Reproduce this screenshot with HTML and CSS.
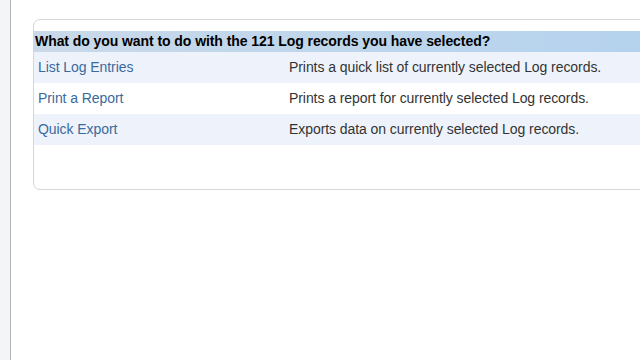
FILE: index.html
```html
<!DOCTYPE html>
<html>
<head>
<meta charset="utf-8">
<link rel="stylesheet" href="styles.css">
</head>
<body>
<div class="page">
  <div class="strip"></div>
  <div class="main">
    <div class="panel">
      <div class="header">What do you want to do with the 121 Log records you have selected?</div>
      <div class="row alt">
        <a class="link">List Log Entries</a>
        <span class="desc">Prints a quick list of currently selected Log records.</span>
      </div>
      <div class="row">
        <a class="link">Print a Report</a>
        <span class="desc">Prints a report for currently selected Log records.</span>
      </div>
      <div class="row alt">
        <a class="link">Quick Export</a>
        <span class="desc">Exports data on currently selected Log records.</span>
      </div>
    </div>
  </div>
</div>
</body>
</html>
```
FILE: styles.css
```css
html, body {
  margin: 0;
  padding: 0;
  background: #ffffff;
  font-family: "Liberation Sans", Arial, sans-serif;
}
.page {
  display: flex;
  width: 640px;
  height: 360px;
  overflow: hidden;
}
.strip {
  width: 10px;
  flex: none;
  background: #f3f5f7;
  border-right: 1px solid #b4b4b4;
}
.main {
  flex: 1;
  padding: 19px 0 0 22px;
  min-width: 0;
}
.panel {
  width: 640px;
  height: 158px;
  border: 1px solid #d6d6d6;
  border-radius: 7px 0 0 7px;
  padding-top: 11px;
  box-sizing: content-box;
}
.header {
  height: 21px;
  line-height: 21px;
  padding-left: 1px;
  font-size: 14px;
  font-weight: bold;
  letter-spacing: -0.07px;
  color: #000;
  background: linear-gradient(to right, #c9d9e9, #b4d2ee);
  white-space: nowrap;
}
.row {
  display: flex;
  height: 31px;
  box-sizing: border-box;
  padding-bottom: 2px;
  align-items: center;
  font-size: 14px;
  letter-spacing: -0.07px;
  white-space: nowrap;
}
.row.alt {
  background: #eef3fb;
}
.link {
  width: 251px;
  padding-left: 4px;
  color: #3a6a9c;
  flex: none;
}
.desc {
  color: #333333;
}
```
